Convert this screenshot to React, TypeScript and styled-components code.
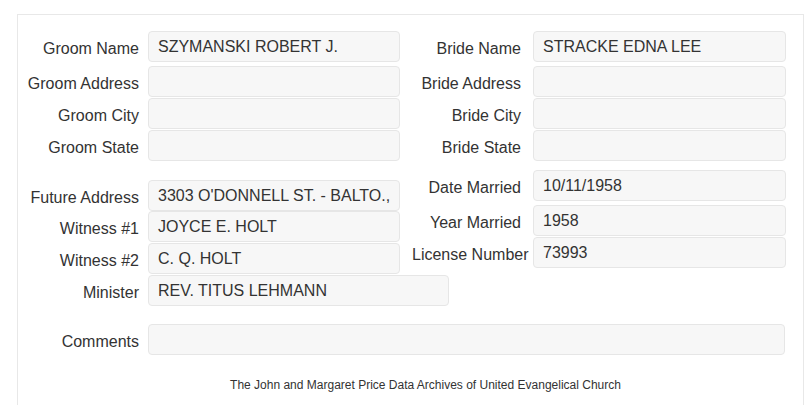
import styled, { createGlobalStyle } from 'styled-components';

const GlobalStyle = createGlobalStyle`
  body {
    margin: 0;
    background: #ffffff;
    font-family: "Liberation Sans", Arial, sans-serif;
    color: #333333;
  }
`;

const Page = styled.div`
  padding: 14px 0 0 17px;
  width: 805px;
  height: 405px;
  box-sizing: border-box;
  overflow: hidden;
`;

const Panel = styled.div`
  width: 787px;
  height: 420px;
  box-sizing: border-box;
  border: 1px solid #e8e8e8;
  padding-top: 16px;
`;

const Section = styled.div<{ $top?: number }>`
  display: flex;
  margin-top: ${p => p.$top ?? 0}px;
`;

const Column = styled.div<{ $width?: number; $padTop?: number; $padLeft?: number }>`
  display: flex;
  flex-direction: column;
  width: ${p => (p.$width ? `${p.$width}px` : 'auto')};
  padding-top: ${p => p.$padTop ?? 0}px;
  padding-left: ${p => p.$padLeft ?? 0}px;
`;

const Row = styled.div<{ $gap: number; $after?: number }>`
  display: flex;
  align-items: center;
  gap: ${p => p.$gap}px;
  margin-bottom: ${p => p.$after ?? 0}px;
`;

const Label = styled.label<{ $width: number }>`
  flex: 0 0 ${p => p.$width}px;
  width: ${p => p.$width}px;
  text-align: right;
  white-space: nowrap;
  font-size: 16px;
  color: #333333;
  padding-top: 4px;
`;

const Field = styled.div<{ $width: number }>`
  flex: 0 0 ${p => p.$width}px;
  width: ${p => p.$width}px;
  height: 31px;
  box-sizing: border-box;
  background: #f7f7f7;
  border: 1px solid #e6e6e6;
  border-radius: 4px;
  padding: 1px 9px 0;
  display: flex;
  align-items: center;
  font-size: 16px;
  color: #333333;
  white-space: nowrap;
  overflow: hidden;
`;

const Footer = styled.p`
  margin: 23px 0 0;
  padding-left: 30px;
  text-align: center;
  font-size: 12px;
  color: #333333;
`;

type Item = { label: string; value?: string; width?: number; after?: number };

const LeftRows = ({ items }: { items: Item[] }) => (
  <>
    {items.map(i => (
      <Row key={i.label} $gap={9} $after={i.after}>
        <Label $width={121}>{i.label}</Label>
        <Field $width={i.width ?? 252}>{i.value}</Field>
      </Row>
    ))}
  </>
);

const RightRows = ({ items }: { items: Item[] }) => (
  <>
    {items.map(i => (
      <Row key={i.label} $gap={12} $after={i.after}>
        <Label $width={109}>{i.label}</Label>
        <Field $width={253}>{i.value}</Field>
      </Row>
    ))}
  </>
);

export default function App() {
  return (
    <>
      <GlobalStyle />
      <Page>
        <Panel>
          <Section>
            <Column $width={382}>
              <LeftRows
                items={[
                  { label: 'Groom Name', value: 'SZYMANSKI ROBERT J.', after: 4 },
                  { label: 'Groom Address', after: 1 },
                  { label: 'Groom City', after: 1 },
                  { label: 'Groom State' },
                ]}
              />
            </Column>
            <Column $padLeft={12}>
              <RightRows
                items={[
                  { label: 'Bride Name', value: 'STRACKE EDNA LEE', after: 4 },
                  { label: 'Bride Address', after: 1 },
                  { label: 'Bride City', after: 1 },
                  { label: 'Bride State' },
                ]}
              />
            </Column>
          </Section>

          <Section $top={9}>
            <Column $width={382} $padTop={10}>
              <LeftRows
                items={[
                  { label: 'Future Address', value: "3303 O'DONNELL ST. - BALTO.," },
                  { label: 'Witness #1', value: 'JOYCE E. HOLT', after: 1 },
                  { label: 'Witness #2', value: 'C. Q. HOLT', after: 1 },
                  { label: 'Minister', value: 'REV. TITUS LEHMANN', width: 301 },
                ]}
              />
            </Column>
            <Column $padLeft={12}>
              <RightRows
                items={[
                  { label: 'Date Married', value: '10/11/1958', after: 4 },
                  { label: 'Year Married', value: '1958', after: 1 },
                  { label: 'License Number', value: '73993' },
                ]}
              />
            </Column>
          </Section>

          <Section $top={18}>
            <Column>
              <LeftRows items={[{ label: 'Comments', width: 637 }]} />
            </Column>
          </Section>

          <Footer>The John and Margaret Price Data Archives of United Evangelical Church</Footer>
        </Panel>
      </Page>
    </>
  );
}
